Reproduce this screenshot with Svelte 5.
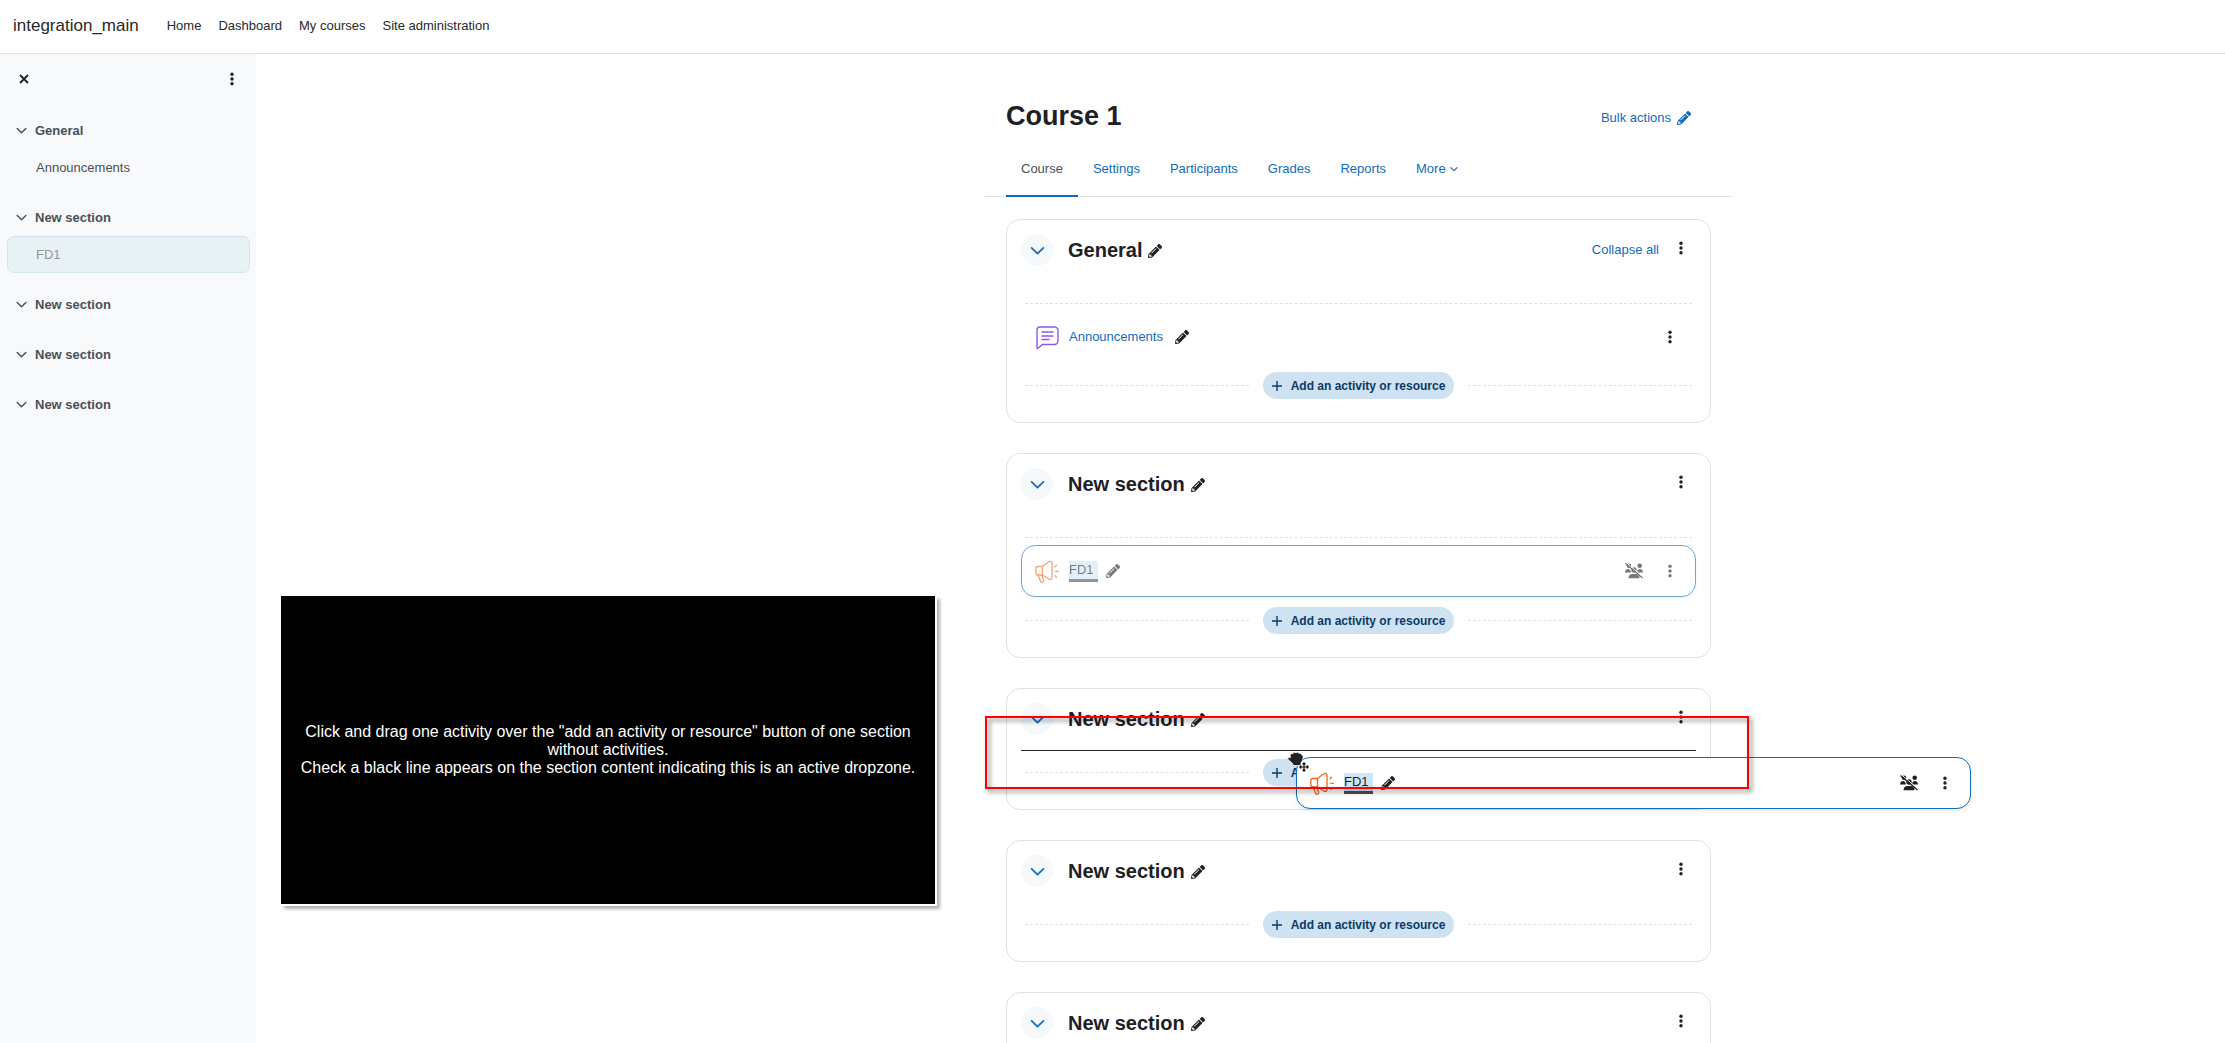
<script>
    const navItems = ['Home', 'Dashboard', 'My courses', 'Site administration'];
    const tabs = ['Course', 'Settings', 'Participants', 'Grades', 'Reports'];

    const sections = [
        { title: 'General', activity: { name: 'Announcements', type: 'forum' }, collapseAll: true },
        { title: 'New section', activity: { name: 'FD1', type: 'feedback', dragging: true } },
        { title: 'New section', dropzone: true },
        { title: 'New section' },
        { title: 'New section' }
    ];
</script>

{#snippet pencil()}
    <svg class="icon" viewBox="0 0 512 512" width="14" height="14" aria-hidden="true">
        <path fill="currentColor" d="M497.9 142.1l-46.1 46.1c-4.7 4.7-12.3 4.7-17 0l-111-111c-4.7-4.7-4.7-12.3 0-17l46.1-46.1c18.7-18.7 49.1-18.7 67.9 0l60.1 60.1c18.8 18.7 18.8 49.1 0 67.9zM284.2 99.8L21.6 362.4.4 483.9c-2.9 16.4 11.4 30.6 27.800 27.800l121.500-21.300 262.600-262.600c4.700-4.700 4.700-12.300 0-17l-111-111c-4.800-4.700-12.400-4.700-17.100 0zM124.100 339.900c-5.500-5.500-5.500-14.300 0-19.800l154-154c5.500-5.500 14.300-5.500 19.800 0s5.500 14.300 0 19.800l-154 154c-5.500 5.500-14.300 5.500-19.800 0zM88 424h48v36.300l-64.500 11.300-31.100-31.100L51.700 376H88v48z" />
    </svg>
{/snippet}

{#snippet chevron(width, stroke)}
    <svg class="icon" viewBox="0 0 14 14" {width} height={width} aria-hidden="true">
        <path d="M1.5 4.5 7 10l5.5-5.5" fill="none" stroke="currentColor" stroke-width={stroke} stroke-linecap="round" stroke-linejoin="round" />
    </svg>
{/snippet}

{#snippet dots()}
    <svg class="icon" viewBox="0 0 4 14" width="4" height="14" aria-hidden="true">
        <circle cx="2" cy="2.3" r="1.7" fill="currentColor" />
        <circle cx="2" cy="7" r="1.7" fill="currentColor" />
        <circle cx="2" cy="11.7" r="1.7" fill="currentColor" />
    </svg>
{/snippet}

{#snippet activityRow(activity)}
    <div class="activity" class:selected={activity.type === 'feedback'} class:dragging={activity.dragging}>
        {#if activity.type === 'forum'}
            <svg class="icon forum" viewBox="0 0 24 24" width="24" height="24" aria-hidden="true">
                <path d="M5 2h14.500a3.500 3.500 0 0 1 3.500 3.500v10.500a3.500 3.500 0 0 1-3.500 3.500H7.500L3.200 23.200q-1.200.6-1.200-.7V5a3 3 0 0 1 3-3z" />
                <path d="M6.500 7h12M6.500 11h12M6.500 14.500h8" />
            </svg>
        {:else}
            <svg class="icon feedback" viewBox="0 0 24 24" width="24" height="24" aria-hidden="true">
                <path d="M7.500 7.500H3Q.8 7.500.8 9.500v4Q.8 16 3.200 16h4.300zM7.500 7.500 13.500 3q3.500-1.700 3.500 2v13.500q-.2 3-3.500 1.300L7.500 16" />
                <path d="M3.200 16 5.500 22.300q.9 1.500 2.500.6.900-.6.500-1.600L6.800 16" />
                <path d="M20 7.800 21.500 6.300M20.500 12.300h3M20 16.700l1.500 1.500" />
            </svg>
        {/if}
        <a class="name" href="#activity">{activity.name}</a>
        <button aria-label="Edit title">{@render pencil()}</button>
        <span class="spacer"></span>
        {#if activity.type === 'feedback'}
            <button aria-label="No groups">
                <svg class="icon" viewBox="0 0 18 16" width="18" height="16" aria-hidden="true">
                    <g fill="currentColor">
                        <circle cx="4" cy="2.800" r="2.300" />
                        <circle cx="14.700" cy="2.800" r="2.300" />
                        <path d="M0 9.600Q.2 5.900 3 5.900q2.500 0 3 3.700zM12 9.600q.3-3.700 3-3.700 2.700 0 3 3.700z" />
                        <circle cx="9" cy="7" r="2.700" />
                        <path d="M3.500 15.300q.1-4.300 4-4.300h3q3.900 0 4 4.300z" />
                    </g>
                    <path class="gap" d="M1.700 0 18 13.800" />
                    <path d="M.5.600 17.500 15" fill="none" stroke="currentColor" stroke-width="1.300" />
                </svg>
            </button>
        {/if}
        <button class="row-menu" aria-label="Actions">{@render dots()}</button>
    </div>
{/snippet}

<div class="page">
    <header>
        <a class="brand" href="#home">integration_main</a>
        <nav>
            {#each navItems as item}
                <a href="#nav">{item}</a>
            {/each}
        </nav>
    </header>

    <div class="layout">
        <aside>
            <div class="drawer-head">
                <button aria-label="Close course index">
                    <svg class="icon" viewBox="0 0 10 10" width="10" height="10" aria-hidden="true">
                        <path d="M1 1l8 8M9 1 1 9" fill="none" stroke="currentColor" stroke-width="1.800" />
                    </svg>
                </button>
                <button aria-label="Course index options">{@render dots()}</button>
            </div>
            {#each sections as section}
                <div class="index-section">
                    <div class="index-title">
                        <button aria-label="Collapse">{@render chevron(11, 1.8)}</button>
                        <a href="#section">{section.title}</a>
                    </div>
                    {#if section.activity}
                        <a class="index-item" class:picked={section.activity.dragging} href="#activity">{section.activity.name}</a>
                    {/if}
                </div>
            {/each}
        </aside>

        <main>
            <div class="content">
                <div class="course-head">
                    <h1>Course 1</h1>
                    <button class="bulk">Bulk actions {@render pencil()}</button>
                </div>

                <nav class="tabs">
                    {#each tabs as tab, i}
                        <a href="#tab" class:active={i === 0}>{tab}</a>
                    {/each}
                    <a href="#more">More {@render chevron(8, 2)}</a>
                </nav>

                <div class="sections">
                    {#each sections as section}
                        <section class="card">
                            <div class="card-head">
                                <button class="toggle" aria-label="Collapse section">{@render chevron(15, 1.6)}</button>
                                <h2>{section.title}</h2>
                                <button class="rename" aria-label="Edit section name">{@render pencil()}</button>
                                <span class="spacer"></span>
                                {#if section.collapseAll}
                                    <a href="#collapse">Collapse all</a>
                                {/if}
                                <button class="card-menu" aria-label="Section actions">{@render dots()}</button>
                            </div>

                            {#if section.activity}
                                <div class="divider"></div>
                                {@render activityRow(section.activity)}
                            {/if}

                            <div class="add-row" class:empty={!section.activity}>
                                <span class="dash"></span>
                                <button class="add">
                                    <svg class="icon" viewBox="0 0 10 10" width="10" height="10" aria-hidden="true">
                                        <path d="M5 0v10M0 5h10" fill="none" stroke="currentColor" stroke-width="1.400" />
                                    </svg>
                                    Add an activity or resource
                                </button>
                                <span class="dash"></span>
                            </div>

                            {#if section.dropzone}
                                <div class="dropline"></div>
                                <div class="ghost">
                                    {@render activityRow({ name: 'FD1', type: 'feedback' })}
                                </div>
                                <div class="marker"></div>
                                <svg class="cursor" viewBox="0 0 24 24" width="24" height="24" aria-hidden="true">
                                    <path d="M2.300 9.500Q0 8.500 1 6.700q1-1 2.300 0L3.200 4Q4 1.700 6 2.700q1-2 3-1 1.800-1.100 3 .5 2.200-.4 2.700 1.500 1.700.6 1.500 2.800Q16 9.500 14.200 11.500L13.700 14.500H6.200L5.700 12.700z" fill="#222" stroke="#fff" stroke-width=".8" />
                                    <path d="M17 11v10M12 16h10" fill="none" stroke="#fff" stroke-width="3" />
                                    <path d="M17 12v8M13 16h8M15.500 13.300 17 11.800l1.500 1.500M15.500 18.700 17 20.200l1.500-1.500M14.300 14.500 12.800 16l1.500 1.500M19.700 14.500l1.500 1.500-1.500 1.500" fill="none" stroke="#111" stroke-width="1.200" />
                                </svg>
                            {/if}
                        </section>
                    {/each}
                </div>
            </div>
        </main>
    </div>

    <div class="note">
        <p>Click and drag one activity over the "add an activity or resource" button of one section without activities.</p>
        <p>Check a black line appears on the section content indicating this is an active dropzone.</p>
    </div>
</div>

<style>
    :global(body) {
        margin: 0;
        background: #fff;
    }

    .page {
        position: relative;
        display: flex;
        flex-direction: column;
        height: 100vh;
        overflow: hidden;
        font-family: 'Liberation Sans', Arial, sans-serif;
        font-size: 13px;
        line-height: 20px;
        color: #1d2125;
    }

    a {
        color: #0f6cbf;
        text-decoration: none;
    }

    button {
        display: inline-flex;
        align-items: center;
        padding: 0;
        border: 0;
        background: none;
        font: inherit;
        color: inherit;
        cursor: pointer;
    }

    h1,
    h2,
    p {
        margin: 0;
    }

    .icon {
        display: block;
        flex: none;
    }

    .spacer {
        flex: 1;
    }

    header {
        display: flex;
        align-items: center;
        gap: 28px;
        box-sizing: border-box;
        height: 54px;
        padding: 0 13px 2px;
        border-bottom: 1px solid #dee2e6;
    }

    header nav {
        display: flex;
        gap: 17px;
    }

    header a {
        color: #282828;
    }

    .brand {
        font-size: 17px;
    }

    .layout {
        display: grid;
        grid-template-columns: 256px 1fr;
        flex: 1;
        min-height: 0;
    }

    /* Course index */
    aside {
        box-sizing: border-box;
        padding: 15px 6px 0 7px;
        background: #f8f9fb;
        color: #495057;
    }

    .drawer-head {
        display: flex;
        align-items: center;
        justify-content: space-between;
        height: 20px;
        margin-bottom: 23px;
        padding: 0 16px 0 12px;
        color: #1d2125;
    }

    .index-section {
        margin-bottom: 13px;
    }

    .index-title {
        display: flex;
        align-items: center;
        gap: 8px;
        height: 37px;
        padding-left: 9px;
        font-weight: bold;
    }

    .index-title a,
    .index-item {
        color: #495057;
    }

    .index-item {
        display: flex;
        align-items: center;
        box-sizing: border-box;
        height: 37px;
        padding-left: 28px;
        border: 1px solid transparent;
        border-radius: 7px;
    }

    .index-item.picked {
        border-color: #cfe6ea;
        background: #e8f1f4;
        color: #8e979d;
    }

    /* Course page */
    main {
        min-width: 0;
        padding-left: 236px;
        overflow-y: auto;
        scrollbar-width: none;
    }

    .content {
        max-width: 747px;
        margin: 0 auto;
        padding-top: 42px;
    }

    .course-head {
        display: flex;
        align-items: center;
        justify-content: space-between;
        height: 40px;
        padding: 0 41px 0 21px;
    }

    h1 {
        font-size: 27px;
        line-height: 36px;
    }

    .bulk {
        gap: 6px;
        padding-top: 4px;
        color: #0f6cbf;
    }

    .tabs {
        display: flex;
        height: 60px;
        padding: 0 21px;
        border-bottom: 1px solid #dee2e6;
    }

    .tabs a {
        display: flex;
        align-items: center;
        gap: 4px;
        box-sizing: border-box;
        height: 61px;
        padding: 4px 15px 0;
        border-top: 2px solid transparent;
        border-bottom: 2px solid transparent;
    }

    .tabs a.active {
        border-bottom-color: #0f6cbf;
        color: #495057;
    }

    .sections {
        display: grid;
        gap: 30px;
        padding: 22px 21px 40px;
    }

    .card {
        position: relative;
        padding: 14px 14px 23px;
        border: 1px solid #dee2e6;
        border-radius: 14px;
    }

    .card-head {
        display: flex;
        align-items: center;
        height: 32px;
    }

    .toggle {
        justify-content: center;
        width: 32px;
        height: 32px;
        border-radius: 50%;
        background: #f5f9fc;
        color: #0f6cbf;
    }

    h2 {
        margin: 0 6px 0 15px;
        font-size: 20px;
        line-height: 24px;
    }

    .rename {
        padding-top: 2px;
    }

    .card-menu {
        align-self: flex-start;
        height: 28px;
        margin: 0 13px 0 20px;
    }

    .divider {
        margin: 37px 4px 7px;
        border-top: 1px dashed #dee2e6;
    }

    .activity {
        display: flex;
        align-items: center;
        box-sizing: border-box;
        height: 51px;
        padding: 0 23px 0 13px;
        border: 1px solid transparent;
        border-radius: 14px;
    }

    .activity .name {
        margin: 0 8px 0 10px;
        padding-right: 4px;
    }

    .activity.selected {
        height: 52px;
        border-color: #0f6cbf;
        background: #fff;
        box-shadow: 0 2px 4px rgba(0, 0, 0, 0.08);
    }

    .activity.selected .name {
        border-bottom: 3px solid #495057;
        background: #d0e6f8;
        color: #1d2125;
        line-height: 18px;
    }

    .activity.dragging {
        opacity: 0.6;
    }

    .row-menu {
        margin-left: 25px;
    }

    .forum {
        fill: none;
        stroke: #8f55f2;
        stroke-width: 1.4;
    }

    .feedback {
        fill: none;
        stroke: #eb6a1c;
        stroke-width: 1.3;
        stroke-linecap: round;
    }

    .gap {
        stroke: #fff;
        stroke-width: 1;
    }

    .add-row {
        display: flex;
        align-items: center;
        gap: 14px;
        margin: 10px 4px 0;
    }

    .add-row.empty {
        margin-top: 24px;
    }

    .dash {
        flex: 1;
        border-top: 1px dashed #dee2e6;
    }

    .add {
        gap: 9px;
        height: 27px;
        padding: 0 9px;
        border-radius: 14px;
        background: #cfe2f2;
        color: #0b3a67;
        font-size: 12px;
        font-weight: bold;
    }

    /* Drag in progress */
    .dropline {
        position: absolute;
        top: 61px;
        right: 14px;
        left: 14px;
        border-top: 1px solid #1d2125;
    }

    .ghost {
        position: absolute;
        top: 68px;
        left: 289px;
        width: 675px;
    }

    .marker {
        position: absolute;
        top: 27px;
        right: -39px;
        bottom: 20px;
        left: -22px;
        border: 2px solid #f00;
        filter: drop-shadow(3px 3px 2px rgba(0, 0, 0, 0.5));
        pointer-events: none;
    }

    .cursor {
        position: absolute;
        top: 62px;
        left: 280px;
    }

    .note {
        position: absolute;
        top: 596px;
        left: 281px;
        display: flex;
        flex-direction: column;
        justify-content: center;
        box-sizing: border-box;
        width: 654px;
        height: 308px;
        padding: 0 16px;
        background: #000;
        box-shadow: 0 0 0 2px #fff, 4px 4px 3px 1px rgba(0, 0, 0, 0.3);
        color: #fff;
        font-size: 16px;
        line-height: 18px;
        text-align: center;
    }
</style>
